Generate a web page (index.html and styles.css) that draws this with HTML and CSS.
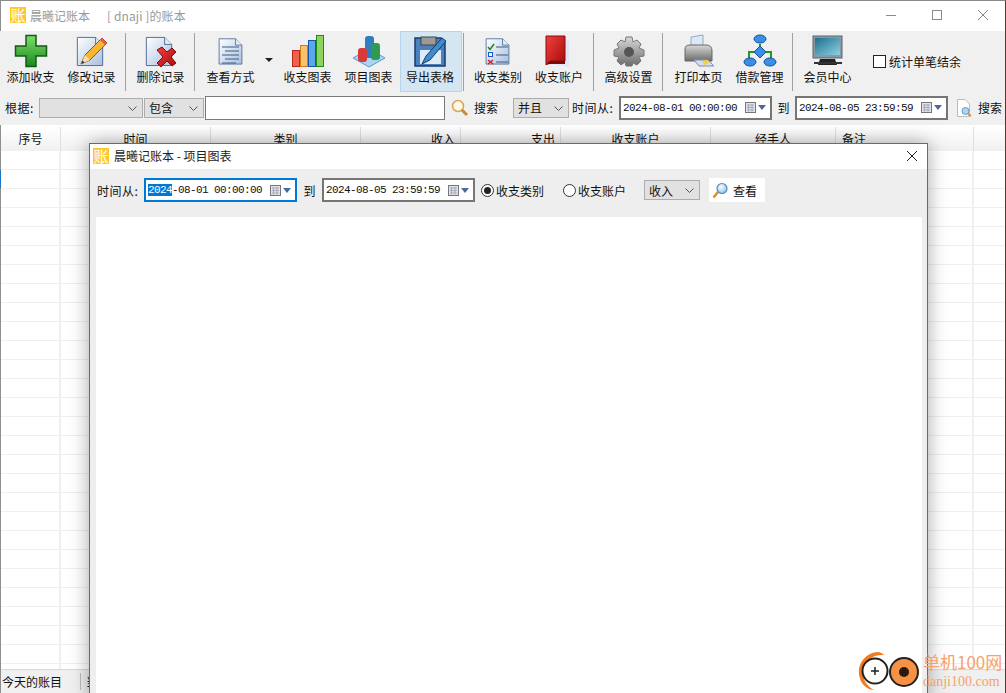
FILE: index.html
```html
<!DOCTYPE html>
<html lang="zh-CN">
<head>
    <meta charset="UTF-8">
    <meta name="viewport" content="width=device-width, initial-scale=1.0">
    <title>晨曦记账本</title>
    <link rel="stylesheet" href="styles.css">
</head>
<body>
    <svg class="defs" width="0" height="0">
        <defs>
            <linearGradient id="gGreen" x1="0" y1="0" x2="0" y2="1"><stop offset="0" stop-color="#7fdc6a"/><stop offset="1" stop-color="#178a1c"/></linearGradient>
            <linearGradient id="gPaper" x1="0" y1="0" x2="1" y2="1"><stop offset="0" stop-color="#fff"/><stop offset="1" stop-color="#a9bfdf"/></linearGradient>
            <linearGradient id="gRed" x1="0" y1="0" x2="1" y2="1"><stop offset="0" stop-color="#f04040"/><stop offset="1" stop-color="#a80a0a"/></linearGradient>
            <linearGradient id="gGray" x1="0" y1="0" x2="0" y2="1"><stop offset="0" stop-color="#d8d8d8"/><stop offset="1" stop-color="#6c6c6c"/></linearGradient>
            <linearGradient id="gScreen" x1="0" y1="0" x2="1" y2="1"><stop offset="0" stop-color="#1c6f8e"/><stop offset="1" stop-color="#8fd0e0"/></linearGradient>
            <radialGradient id="gLens" cx=".4" cy=".35" r=".7"><stop offset="0" stop-color="#fff"/><stop offset="1" stop-color="#7ec3ee"/></radialGradient>
            <symbol id="paper" viewBox="0 0 32 32">
                <path d="M2.5 1.5H22L29.500 9V31.500H2.500Z" fill="url(#gPaper)" stroke="#4a6a98"/>
                <path d="M22 1.500V9H29.500" fill="#e8eef8" stroke="#4a6a98"/>
            </symbol>
            <symbol id="calendar" viewBox="0 0 11 11">
                <rect x=".5" y=".5" width="10" height="10" fill="#dfe3ea" stroke="#777"/>
                <path d="M2 3H9M2 5.500H9M2 8H9M3.500 2V9.500M7 2V9.500" stroke="#aab"/>
            </symbol>
            <symbol id="chevron" viewBox="0 0 9 5">
                <path d="M.5 .5L4.500 4.500L8.500 .5" fill="none" stroke="#555"/>
            </symbol>
        </defs>
    </svg>

    <div class="window">
        <div class="titlebar">
            <span class="app-icon">账</span>
            <span class="title-name">晨曦记账本</span>
            <span class="title-user">[ dnaji ]的账本</span>
            <div class="win-controls">
                <svg width="12" height="12" viewBox="0 0 12 12"><path d="M1 6.500H11" stroke="#8a8a8a"/></svg>
                <svg width="12" height="12" viewBox="0 0 12 12"><rect x="1.500" y="1.500" width="9" height="9" fill="none" stroke="#8a8a8a"/></svg>
                <svg width="12" height="12" viewBox="0 0 12 12"><path d="M1 1L11 11M11 1L1 11" stroke="#8a8a8a"/></svg>
            </div>
        </div>

        <div class="toolbar">
            <div class="tool">
                <svg width="34" height="34" viewBox="0 0 34 34"><path d="M12 1.500H22V12H32.500V22H22V32.500H12V22H1.500V12H12Z" fill="url(#gGreen)" stroke="#0f5d14" stroke-width="1.500"/></svg>
                <span>添加收支</span>
            </div>
            <div class="tool">
                <svg width="34" height="34" viewBox="0 0 34 34"><use href="#paper" width="30" height="32" x="0" y="1"/><path d="M6 30L10 21L27 4L32 9L15 26Z" fill="#f7b733" stroke="#8a5a10"/><path d="M27 4L32 9L30 11L25 6Z" fill="#e25a5a"/><path d="M6 30L10 21L15 26Z" fill="#f6dcb0"/><path d="M6 30L7.500 26.500L9.500 28.500Z" fill="#333"/></svg>
                <span>修改记录</span>
            </div>
            <i class="sep"></i>
            <div class="tool">
                <svg width="34" height="34" viewBox="0 0 34 34"><use href="#paper" width="30" height="32" x="0" y="1"/><path d="M13 16L18 13L23 18L28 14L32 18L27 23L32 29L28 32L23 27L17 33L13 29L19 23Z" fill="url(#gRed)" stroke="#7d0c0c"/></svg>
                <span>删除记录</span>
            </div>
            <i class="sep"></i>
            <div class="tool tool-drop">
                <svg width="30" height="34" viewBox="0 0 30 34"><use href="#paper" width="27" height="32" x="1" y="1"/><path d="M6 13H23M9 17H23M6 21H23M9 25H23M6 29H20" stroke="#3a5a88"/></svg>
                <span>查看方式</span>
                <b class="drop-arrow"></b>
            </div>
            <div class="tool">
                <svg width="34" height="34" viewBox="0 0 34 34"><rect x="1.500" y="16.500" width="7" height="16" fill="#f2604c" stroke="#b32a1a"/><rect x="9.500" y="11.500" width="7" height="21" fill="#f8c36a" stroke="#d47a1a"/><rect x="17.500" y="6.500" width="7" height="26" fill="#5aa8ea" stroke="#1555b0"/><rect x="25.500" y="1.500" width="7" height="31" fill="#8ed45c" stroke="#1f8a1f"/></svg>
                <span>收支图表</span>
            </div>
            <div class="tool">
                <svg width="34" height="34" viewBox="0 0 34 34"><path d="M1 24L17 15L33 24L17 33Z" fill="#a9d4f2" stroke="#5a9ed0"/><rect x="13" y="2" width="9" height="22" rx="3" fill="#2f7fc0"/><rect x="6" y="14" width="9" height="14" rx="3" fill="#d83a3a"/><rect x="19" y="9" width="9" height="17" rx="3" fill="#2f9a50"/></svg>
                <span>项目图表</span>
            </div>
            <div class="tool tool-active">
                <svg width="34" height="34" viewBox="0 0 34 34"><path d="M2 4H28L32 8V32H2Z" fill="#4a7fc0" stroke="#1c3a6c" stroke-width="1.500"/><rect x="8" y="3" width="15" height="8" fill="#9a9a9a" stroke="#444"/><rect x="7" y="16" width="21" height="14" fill="#dcebf8"/><path d="M9 30L13 22L29 4L33 7L17 26Z" fill="#3f8ccc" stroke="#1c3a6c"/></svg>
                <span>导出表格</span>
            </div>
            <i class="sep sep-tight"></i>
            <div class="tool w60">
                <svg width="30" height="34" viewBox="0 0 30 34"><use href="#paper" width="27" height="32" x="1" y="1"/><path d="M5 13L7 15.500L11 10" fill="none" stroke="#1f8a1f" stroke-width="1.500"/><rect x="5.500" y="18.500" width="4" height="4" fill="#fff" stroke="#1555d0"/><path d="M5 26L10 30M10 26L5 30" stroke="#d02020" stroke-width="1.500"/><path d="M13 13H25M13 21H25M13 28H25" stroke="#3a5a88"/></svg>
                <span>收支类别</span>
            </div>
            <div class="tool w62">
                <svg width="28" height="34" viewBox="0 0 28 34"><path d="M6 30L24 33V7L6 3Z" fill="#dfe6f6"/><path d="M1 2H20V27H5L1 31Z" fill="url(#gRed)" stroke="#8a0a0a"/><path d="M1 31L5 27H20V30H5Z" fill="#7d0a0a"/></svg>
                <span>收支账户</span>
            </div>
            <i class="sep"></i>
            <div class="tool">
                <svg width="34" height="34" viewBox="0 0 34 34"><path d="M14 3H20L21 8L25 6L29 10L27 14L32 16V22L27 23L29 27L25 31L21 29L20 32H14L13 28L9 31L5 27L7 23L2 22V16L7 14L5 10L9 6L13 8Z" fill="url(#gGray)" stroke="#777"/><circle cx="17" cy="18" r="5" fill="#555"/></svg>
                <span>高级设置</span>
            </div>
            <i class="sep"></i>
            <div class="tool w63">
                <svg width="34" height="34" viewBox="0 0 34 34"><path d="M9 3L21 1V12H9Z" fill="#dbe8f6" stroke="#9ab"/><path d="M3 15Q3 11 8 11H24Q30 11 30 17V27H3Z" fill="url(#gGray)" stroke="#666"/><path d="M12 26H26L32 32H17Z" fill="#cfe0f4" stroke="#88a"/><path d="M20 27L25 26L27 29L22 31Z" fill="#f2d33a"/></svg>
                <span>打印本页</span>
            </div>
            <div class="tool w59">
                <svg width="34" height="34" viewBox="0 0 34 34"><path d="M17 10V13M11 18H6V24M23 18H28V24" fill="none" stroke="#1f9a1f" stroke-width="2"/><ellipse cx="17" cy="5" rx="6" ry="4" fill="#3a8ee6" stroke="#12509a"/><path d="M17 12L23 18L17 24L11 18Z" fill="#3a8ee6" stroke="#12509a"/><ellipse cx="7" cy="28" rx="6" ry="4" fill="#3a8ee6" stroke="#12509a"/><ellipse cx="27" cy="28" rx="6" ry="4" fill="#3a8ee6" stroke="#12509a"/></svg>
                <span>借款管理</span>
            </div>
            <i class="sep"></i>
            <div class="tool">
                <svg width="34" height="34" viewBox="0 0 34 34"><rect x="2" y="2" width="29" height="22" fill="#8a9aa4" stroke="#55666f"/><rect x="4" y="4" width="25" height="17" fill="url(#gScreen)"/><path d="M9 25H24L26 31H7Z" fill="#222"/><path d="M3 29H31" stroke="#333" stroke-width="2"/></svg>
                <span>会员中心</span>
            </div>
            <label class="check-total"><i class="checkbox"></i>统计单笔结余</label>
        </div>

        <div class="filters">
            <span class="filter-label">根据:</span>
            <div class="combo combo-field"><svg class="chev" width="9" height="5"><use href="#chevron"/></svg></div>
            <div class="combo combo-match">包含<svg class="chev" width="9" height="5"><use href="#chevron"/></svg></div>
            <div class="search-input"></div>
            <svg class="search-icon" width="18" height="18" viewBox="0 0 18 18"><circle cx="7" cy="7" r="5.500" fill="#fff7e4" stroke="#d0a860" stroke-width="1.500"/><path d="M11 11L16 16" stroke="#c88a40" stroke-width="3"/></svg>
            <span class="search-text">搜索</span>
            <div class="combo combo-logic">并且<svg class="chev" width="9" height="5"><use href="#chevron"/></svg></div>
            <span class="time-label">时间从:</span>
            <div class="date-box">
                <span class="date-text">2024-08-01 00:00:00</span>
                <svg class="cal" width="11" height="11"><use href="#calendar"/></svg>
                <b class="date-arrow"></b>
            </div>
            <span class="to-label">到</span>
            <div class="date-box">
                <span class="date-text">2024-08-05 23:59:59</span>
                <svg class="cal" width="11" height="11"><use href="#calendar"/></svg>
                <b class="date-arrow"></b>
            </div>
            <svg class="doc-search" width="18" height="18" viewBox="0 0 18 18"><path d="M2.500 .5H10L14.500 5V17.500H2.500Z" fill="#fff" stroke="#bbb"/><circle cx="10.500" cy="12" r="3.500" fill="#a9d4f2" stroke="#6a9cc4"/><path d="M13 15L16 17" stroke="#d88a3a" stroke-width="2"/></svg>
            <span class="search-text">搜索</span>
        </div>

        <div class="table">
            <div class="table-head">
                <div class="col col-no">序号</div>
                <div class="col col-time">时间</div>
                <div class="col col-type">类别</div>
                <div class="col col-money num">收入</div>
                <div class="col col-money num">支出</div>
                <div class="col col-account">收支账户</div>
                <div class="col col-person">经手人</div>
                <div class="col col-note note">备注</div>
            </div>
            <div class="table-body">
                <div class="col col-no"></div>
                <div class="col col-time"></div>
                <div class="col col-type"></div>
                <div class="col col-money"></div>
                <div class="col col-money"></div>
                <div class="col col-account"></div>
                <div class="col col-person"></div>
                <div class="col col-note"></div>
            </div>
        </div>

        <div class="tabs">
            <span class="tab">今天的账目</span>
            <span class="tab">当月的账目</span>
        </div>
    </div>

    <!-- 项目图表 弹窗 -->
    <div class="dialog">
        <div class="dialog-title">
            <span class="app-icon">账</span>
            <span>晨曦记账本 - 项目图表</span>
            <svg class="dialog-close" width="12" height="12" viewBox="0 0 12 12"><path d="M1 1L11 11M11 1L1 11" stroke="#222"/></svg>
        </div>
        <div class="dialog-bar">
            <span class="dlg-time">时间从:</span>
            <div class="date-box date-focus">
                <span class="date-text"><em>2024</em>-08-01 00:00:00</span>
                <svg class="cal" width="11" height="11"><use href="#calendar"/></svg>
                <b class="date-arrow"></b>
            </div>
            <span class="dlg-to">到</span>
            <div class="date-box">
                <span class="date-text">2024-08-05 23:59:59</span>
                <svg class="cal" width="11" height="11"><use href="#calendar"/></svg>
                <b class="date-arrow"></b>
            </div>
            <label class="radio radio-on"><i></i>收支类别</label>
            <label class="radio"><i></i>收支账户</label>
            <div class="combo combo-income">收入<svg class="chev" width="9" height="5"><use href="#chevron"/></svg></div>
            <div class="view-btn">
                <svg width="17" height="17" viewBox="0 0 17 17"><path d="M6 10L1.500 15.500" stroke="#e08a2a" stroke-width="2.500"/><circle cx="10" cy="6.500" r="5" fill="url(#gLens)" stroke="#5a8cc0" stroke-width="1.200"/></svg>
                <span>查看</span>
            </div>
        </div>
        <div class="dialog-body"></div>
    </div>

    <!-- 水印 -->
    <div class="watermark">
        <svg width="64" height="44" viewBox="0 0 64 44">
            <path d="M5 34C-3 20 5 5 20 3C24 3 26 5 27 6C15 5 6 13 6 24C6 31 10 37 17 41C12 41 8 38 5 34Z" fill="#f47a20"/>
            <circle cx="18" cy="22" r="12.500" fill="#fff" stroke="#222" stroke-width="2"/>
            <path d="M14 22H22M18 18V26" stroke="#222" stroke-width="1.500"/>
            <circle cx="47" cy="23" r="14" fill="#f79245" stroke="#222" stroke-width="2"/>
            <circle cx="47" cy="23" r="5" fill="#2a1a10"/>
        </svg>
        <div class="watermark-text">
            <span class="wm-cn">单机100网</span>
            <span class="wm-en">danji100.com</span>
        </div>
    </div>
</body>
</html>
```

FILE: styles.css
```css
html, body {
    margin: 0;
    padding: 0;
    height: 100%;
    overflow: hidden;
}

body {
    font-family: "Noto Sans CJK SC", "Liberation Sans", sans-serif;
    font-size: 12px;
    color: #111;
    background-color: #fff;
}

.defs {
    display: block;
    height: 0;
}

.window {
    height: 693px;
    display: flex;
    flex-direction: column;
    border-top: 1px solid #8a8a88;
    border-left: 1px solid #8f8f8f;
    border-right: 1px solid #4a3a34;
    box-sizing: border-box;
}

.titlebar {
    height: 30px;
    flex: none;
    display: flex;
    align-items: center;
    box-sizing: border-box;
    padding: 0 0 2px 9px;
    background-color: #fff;
    color: #9a9a9a;
}

.app-icon {
    width: 16px;
    height: 16px;
    flex: none;
    display: flex;
    align-items: center;
    justify-content: center;
    background-color: #ffc72c;
    color: #fff;
    font-size: 15px;
    line-height: 16px;
}

.title-name {
    margin-left: 4px;
}

.title-user {
    margin-left: 17px;
    letter-spacing: 0.1px;
}

.win-controls {
    margin-left: auto;
    display: flex;
    gap: 34px;
    padding-right: 16px;
}

.toolbar {
    height: 61px;
    flex: none;
    display: flex;
    align-items: stretch;
    margin-left: -1px;
    background-color: #f0f0f0;
}

.tool {
    width: 61px;
    flex: none;
    display: flex;
    flex-direction: column;
    align-items: center;
    justify-content: flex-end;
    box-sizing: border-box;
    padding-bottom: 7px;
    position: relative;
}

.tool svg {
    margin-bottom: 1px;
}

.tool span {
    line-height: 16px;
    white-space: nowrap;
}

.w59 { width: 59px; }
.w60 { width: 60px; }
.w62 { width: 62px; }
.w63 { width: 63px; }

.tool-drop {
    width: 78px;
    padding-right: 15px;
}

.drop-arrow {
    position: absolute;
    right: 4px;
    top: 27px;
    border: 4px solid transparent;
    border-top-color: #222;
    border-bottom: 0;
}

.tool-active {
    width: 62px;
    margin-left: 1px;
    background-color: #d5e6f3;
    border: 1px solid #b4d5ee;
    padding-bottom: 6px;
    padding-right: 2px;
}

.sep {
    width: 1px;
    flex: none;
    margin: 2px 4px 1px 3px;
    background-color: #a0a0a0;
}

.sep-tight {
    margin-left: 1px;
}

.check-total {
    display: flex;
    align-items: center;
    gap: 3px;
    margin: 8px 0 0 15px;
    height: 44px;
}

.checkbox {
    width: 11px;
    height: 11px;
    border: 1px solid #222;
    background-color: #fff;
}

.filters {
    height: 33px;
    flex: none;
    display: flex;
    align-items: center;
    box-sizing: border-box;
    margin-left: -1px;
    background-color: #f0f0f0;
    padding: 0 0 2px 5px;
}

.filter-label {
    width: 34px;
    letter-spacing: 0.5px;
}

.combo {
    height: 20px;
    box-sizing: border-box;
    flex: none;
    display: flex;
    align-items: center;
    padding-left: 4px;
    background-color: #e1e1e1;
    border: 1px solid #adadad;
    position: relative;
}

.chev {
    position: absolute;
    right: 5px;
    top: 7px;
}

.combo-field {
    width: 104px;
}

.combo-match {
    width: 60px;
    margin-left: 1px;
}

.search-input {
    width: 240px;
    height: 24px;
    box-sizing: border-box;
    margin-left: 1px;
    background-color: #fff;
    border: 1px solid #7a7a7a;
}

.search-icon {
    margin-left: 6px;
}

.search-text {
    margin-left: 5px;
}

.combo-logic {
    width: 56px;
    margin-left: 15px;
}

.time-label {
    margin-left: 3px;
    width: 47px;
    letter-spacing: 0.5px;
}

.date-box {
    width: 153px;
    height: 24px;
    box-sizing: border-box;
    flex: none;
    display: flex;
    align-items: center;
    padding-left: 2px;
    background-color: #fff;
    border: 2px solid #767676;
}

.date-text {
    font-family: "Liberation Mono", monospace;
    font-size: 11px;
    letter-spacing: -0.6px;
    white-space: nowrap;
    color: #111;
}

.date-text em {
    font-style: normal;
    color: #fff;
    background-color: #0078d7;
}

.cal {
    margin-left: 8px;
    flex: none;
}

.date-arrow {
    margin-left: 2px;
    border: 4px solid transparent;
    border-top: 5px solid #4a6a9a;
    border-bottom: 0;
}

.to-label {
    width: 23px;
    text-align: center;
}

.doc-search {
    margin-left: 7px;
}

.table {
    flex: 1;
    min-height: 0;
    display: flex;
    flex-direction: column;
    margin-top: 2px;
    background-color: #fff;
}

.table-head {
    height: 24px;
    flex: none;
    display: flex;
    background: linear-gradient(#fff, #f0f0f0);
    line-height: 23px;
}

.col {
    flex: none;
    box-sizing: border-box;
    border-right: 1px solid #dfdfdf;
    text-align: center;
}

.col-no { width: 60px; }
.col-time { width: 150px; }
.col-type { width: 150px; }
.col-money { width: 100px; }
.col-account { width: 150px; }
.col-person { width: 125px; }
.col-note { width: 138px; }

.num {
    text-align: right;
    padding-right: 5px;
}

.note {
    text-align: left;
    padding-left: 6px;
}

.table-body {
    flex: 1;
    display: flex;
    min-height: 0;
    position: relative;
    background-image: repeating-linear-gradient(#fff 0, #fff 18px, #efefef 18px, #efefef 19px);
}

.table-body::before {
    content: "";
    position: absolute;
    left: -1px;
    top: 19px;
    width: 1px;
    height: 18px;
    background-color: #1a73c8;
}

.table-body .col {
    border-right: 2px solid #f0f0f0;
}

.tabs {
    height: 24px;
    flex: none;
    display: flex;
    align-items: center;
    background-color: #f0f0f0;
    border-top: 1px solid #d8d8d8;
    box-sizing: border-box;
}

.tab {
    padding: 0 5px 0 1px;
    width: 80px;
    box-sizing: border-box;
    border-right: 1px solid #bbb;
    white-space: nowrap;
    font-size: 12px;
    margin-right: 4px;
}

.dialog {
    position: absolute;
    left: 89px;
    top: 143px;
    width: 839px;
    height: 560px;
    box-sizing: border-box;
    display: flex;
    flex-direction: column;
    background-color: #eee;
    border: 1px solid #6a6a6a;
    box-shadow: 0 0 18px rgba(0, 0, 0, 0.35);
}

.dialog-title {
    height: 25px;
    flex: none;
    display: flex;
    align-items: center;
    gap: 5px;
    box-sizing: border-box;
    padding: 0 0 2px 3px;
    background-color: #fff;
    color: #222;
    position: relative;
}

.dialog-close {
    position: absolute;
    right: 9px;
    top: 6px;
}

.dialog-bar {
    height: 48px;
    flex: none;
    display: flex;
    align-items: center;
    box-sizing: border-box;
    padding: 0 0 6px 7px;
}

.dlg-time {
    width: 47px;
    letter-spacing: 0.5px;
}

.date-focus {
    border-color: #0078d7;
}

.dlg-to {
    width: 25px;
    text-align: center;
}

.radio {
    display: flex;
    align-items: center;
    gap: 2px;
    margin-left: 6px;
}

.radio + .radio {
    margin-left: 19px;
}

.radio i {
    width: 11px;
    height: 11px;
    border: 1px solid #333;
    border-radius: 50%;
    background-color: #fff;
    position: relative;
}

.radio-on i::after {
    content: "";
    position: absolute;
    left: 2px;
    top: 2px;
    width: 7px;
    height: 7px;
    border-radius: 50%;
    background-color: #222;
}

.combo-income {
    width: 56px;
    margin-left: 18px;
}

.view-btn {
    width: 56px;
    height: 24px;
    flex: none;
    display: flex;
    align-items: center;
    gap: 4px;
    padding-left: 3px;
    box-sizing: border-box;
    margin-left: 9px;
    background-color: #fff;
}

.dialog-body {
    flex: 1;
    margin: 0 5px 0 6px;
    background-color: #fff;
}

.watermark {
    position: absolute;
    left: 857px;
    top: 649px;
    display: flex;
    align-items: center;
    gap: 2px;
}

.watermark-text {
    display: flex;
    flex-direction: column;
    align-items: flex-start;
    color: #f6a26a;
    white-space: nowrap;
    line-height: 1;
}

.wm-cn {
    font-size: 17px;
    margin-bottom: 5px;
}

.wm-en {
    font-family: "Liberation Serif", serif;
    font-size: 14px;
}
```
